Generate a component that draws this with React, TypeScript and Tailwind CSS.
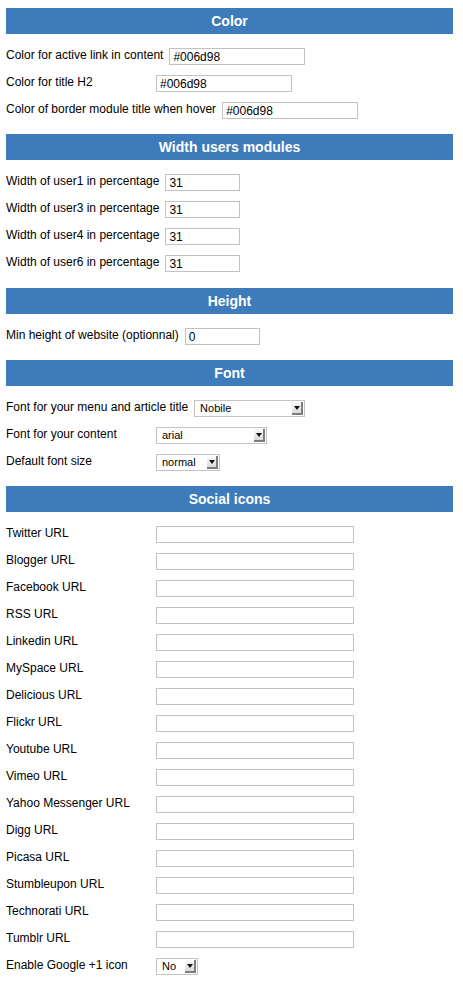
type Field =
  | { kind: "text"; label: string; value?: string; width: number }
  | { kind: "select"; label: string; value: string; width: number };

type Section = { title: string; rows: Field[]; extra?: string };

const social = [
  "Twitter URL",
  "Blogger URL",
  "Facebook URL",
  "RSS URL",
  "Linkedin URL",
  "MySpace URL",
  "Delicious URL",
  "Flickr URL",
  "Youtube URL",
  "Vimeo URL",
  "Yahoo Messenger URL",
  "Digg URL",
  "Picasa URL",
  "Stumbleupon URL",
  "Technorati URL",
  "Tumblr URL",
];

const sections: Section[] = [
  {
    title: "Color",
    rows: [
      { kind: "text", label: "Color for active link in content", value: "#006d98", width: 136 },
      { kind: "text", label: "Color for title H2", value: "#006d98", width: 136 },
      { kind: "text", label: "Color of border module title when hover", value: "#006d98", width: 136 },
    ],
  },
  {
    title: "Width users modules",
    extra: "pb-[6px]",
    rows: ["user1", "user3", "user4", "user6"].map((u) => ({
      kind: "text" as const,
      label: `Width of ${u} in percentage`,
      value: "31",
      width: 75,
    })),
  },
  {
    title: "Height",
    rows: [{ kind: "text", label: "Min height of website (optionnal)", value: "0", width: 75 }],
  },
  {
    title: "Font",
    rows: [
      { kind: "select", label: "Font for your menu and article title", value: "Nobile", width: 111 },
      { kind: "select", label: "Font for your content", value: "arial", width: 111 },
      { kind: "select", label: "Default font size", value: "normal", width: 64 },
    ],
  },
  {
    title: "Social icons",
    extra: "pb-[6px]",
    rows: [
      ...social.map((s) => ({ kind: "text" as const, label: s, width: 198 })),
      { kind: "select" as const, label: "Enable Google +1 icon", value: "No", width: 42 },
    ],
  },
];

const FakeSelect = ({ value, width }: { value: string; width: number }) => (
  <div
    className="relative h-[17px] border border-[#c4c4c4] bg-white flex items-center pl-[5px] text-[11px] text-black"
    style={{ width }}
  >
    <span className="leading-none">{value}</span>
    <div className="absolute right-[1px] top-[1px] bottom-[1px] w-[11px] bg-gradient-to-b from-[#fbfbfb] to-[#dadada] border-r-2 border-b-2 border-r-[#7d7d7d] border-b-[#7d7d7d] flex items-center justify-center">
      <svg width="6" height="4" viewBox="0 0 6 4">
        <path d="M0 0 L6 0 L3 4 Z" fill="#111" />
      </svg>
    </div>
  </div>
);

const Row = ({ f }: { f: Field }) => (
  <div className="flex items-center h-[17px] mb-[10px]">
    <span className="inline-block min-w-[150px] pr-[6px] text-[12px] leading-none text-black -mt-[3px] whitespace-nowrap">
      {f.label}
    </span>
    {f.kind === "text" ? (
      <div
        className="h-[17px] border border-[#c2c2c2] bg-white flex items-center pl-[3px] pt-[1px] text-[12px] text-black"
        style={{ width: f.width }}
      >
        <span className="leading-none">{f.value ?? ""}</span>
      </div>
    ) : (
      <FakeSelect value={f.value} width={f.width} />
    )}
  </div>
);

export default function App() {
  return (
    <div
      className="w-[463px] min-h-[989px] bg-white pl-[6px] pr-[10px] pt-[8px]"
      style={{ fontFamily: "'Liberation Sans', Arial, sans-serif" }}
    >
      {sections.map((s) => (
        <div key={s.title} className={s.extra ?? "pb-[5px]"}>
          <div className="h-[26px] bg-[#3d7bbb] flex items-center justify-center text-white font-bold text-[14px] mb-[14px]">
            {s.title}
          </div>
          {s.rows.map((f) => (
            <Row key={f.label} f={f} />
          ))}
        </div>
      ))}
    </div>
  );
}
